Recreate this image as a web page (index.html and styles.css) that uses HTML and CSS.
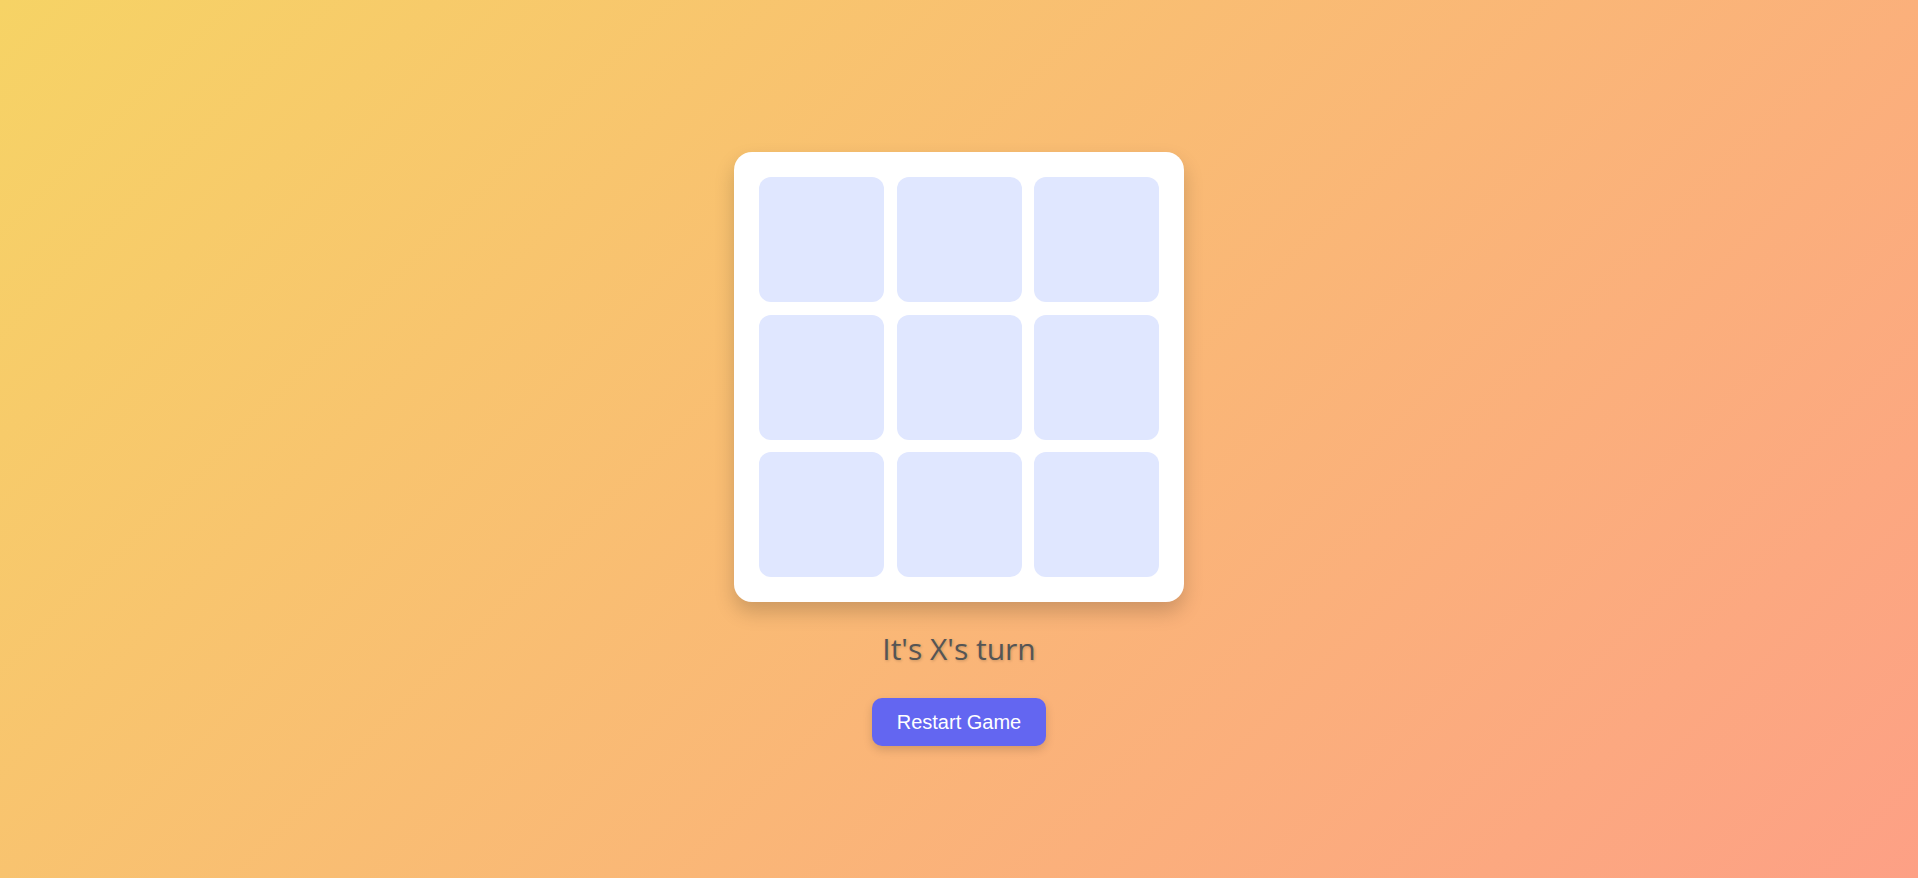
FILE: index.html
```html
<!DOCTYPE html>
<html lang="en">
<head>
<meta charset="UTF-8">
<title>Tic Tac Toe</title>
<link rel="stylesheet" href="styles.css">
</head>
<body>
  <main class="game">
    <div class="board">
      <div class="cell"></div>
      <div class="cell"></div>
      <div class="cell"></div>
      <div class="cell"></div>
      <div class="cell"></div>
      <div class="cell"></div>
      <div class="cell"></div>
      <div class="cell"></div>
      <div class="cell"></div>
    </div>
    <p class="status">It's X's turn</p>
    <button class="restart">Restart Game</button>
  </main>
</body>
</html>
```

FILE: styles.css
```css
html, body {
  margin: 0;
  padding: 0;
  height: 100%;
}
body {
  background: linear-gradient(135deg, #f6d365 0%, #fda085 100%);
  font-family: "Liberation Sans", Arial, sans-serif;
  display: flex;
  justify-content: center;
  align-items: flex-start;
  min-height: 100vh;
  box-sizing: border-box;
  padding-top: 152px;
}
.game {
  display: flex;
  flex-direction: column;
  align-items: center;
}
.board {
  width: 450px;
  height: 450px;
  box-sizing: border-box;
  padding: 25px;
  background: #ffffff;
  border-radius: 18px;
  box-shadow: 0 10px 20px rgba(0, 0, 0, 0.18);
  display: grid;
  grid-template-columns: repeat(3, 1fr);
  grid-template-rows: repeat(3, 1fr);
  gap: 12.5px;
}
.cell {
  background: #e0e7ff;
  border-radius: 12px;
}
.status {
  margin: 27px 0 29px;
  font-family: "Open Sans", sans-serif;
  font-size: 30px;
  line-height: 40px;
  color: #555555;
  text-shadow: 1px 1px 3px rgba(0, 0, 0, 0.2);
}
.restart {
  font-family: "Liberation Sans", Arial, sans-serif;
  font-size: 20px;
  line-height: 24px;
  padding: 12px 25px;
  color: #ffffff;
  background: #6366f1;
  border: none;
  border-radius: 10px;
  box-shadow: 0 4px 10px rgba(0, 0, 0, 0.15);
}
```
